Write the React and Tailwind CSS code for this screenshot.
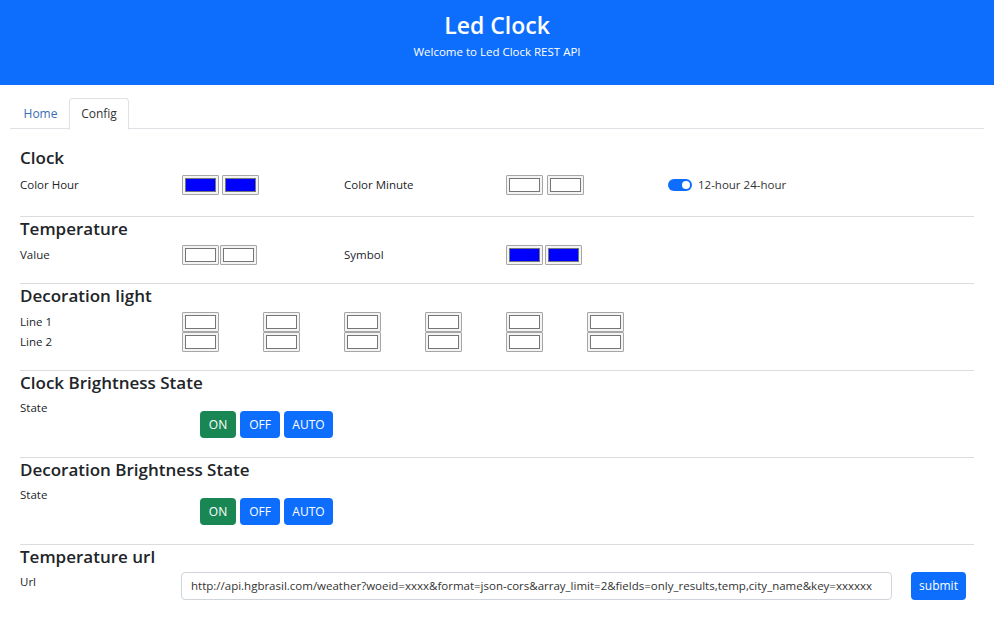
const font = { fontFamily: '"Open Sans", "Noto Sans", sans-serif' };

function Swatch({ color }) {
  return (
    <div className="h-[20px] w-[37px] rounded-[1px] border border-[#a6a6a6] bg-[#f4f4f4] p-[2px]">
      <div className="h-full w-full border border-[#767676]" style={{ background: color }} />
    </div>
  );
}

function Section({ title, children, last }) {
  return (
    <section className={last ? "pt-[1px]" : "border-b border-[#dcdcdc] pt-[1px]"}>
      <h2 className="h-[22px] text-[17px] font-semibold leading-[22px] text-[#212529]">{title}</h2>
      {children}
    </section>
  );
}

function StateButtons() {
  return (
    <div className="ml-[18px] mt-[13px] flex gap-[4px]">
      <button className="h-[27px] w-[36px] rounded-[4px] bg-[#198754] text-[12px] text-white">ON</button>
      <button className="h-[27px] w-[40px] rounded-[4px] bg-[#0d6efd] text-[12px] text-white">OFF</button>
      <button className="h-[27px] w-[49px] rounded-[4px] bg-[#0d6efd] text-[12px] text-white">AUTO</button>
    </div>
  );
}

export default function App() {
  const label = "text-[11.5px] leading-[20px] text-[#212529]";
  return (
    <div className="min-h-[618px] w-[994px] bg-white" style={font}>
      <header className="flex h-[85px] flex-col items-center bg-[#0d6efd] pt-[9px] text-white">
        <h1 className="text-[23px] font-semibold leading-[32px]">Led Clock</h1>
        <p className="mt-[3px] text-[11.5px] leading-[16px]">Welcome to Led Clock REST API</p>
      </header>

      <nav className="mx-[10px] mt-[13px] flex h-[31px] border-b border-[#dee2e6] pl-[2px] text-[12px]">
        <div className="flex h-[31px] w-[57px] items-center justify-center text-[#3b6db5]">Home</div>
        <div className="-mb-px flex h-[32px] w-[60px] items-center justify-center rounded-t-[4px] border border-b-white border-[#dee2e6] bg-white text-[#333]">
          Config
        </div>
      </nav>

      <main className="mx-[20px] mt-[17px] w-[954px]">
        <Section title="Clock">
          <div className="mt-[5px] grid h-[22px] grid-cols-[162px_162px_162px_162px_auto] items-center pb-0">
            <span className={label}>Color Hour</span>
            <div className="flex gap-[3px]">
              <Swatch color="#0000ff" />
              <Swatch color="#0000ff" />
            </div>
            <span className={label}>Color Minute</span>
            <div className="flex gap-[4px]">
              <Swatch color="#ffffff" />
              <Swatch color="#ffffff" />
            </div>
            <div className="flex items-center gap-[6px]">
              <div className="flex h-[12px] w-[24px] items-center justify-end rounded-full bg-[#0d6efd] pr-[2px]">
                <div className="h-[8px] w-[8px] rounded-full bg-white" />
              </div>
              <span className="text-[11.5px] text-[#333]">12-hour 24-hour</span>
            </div>
          </div>
          <div className="h-[20px]" />
        </Section>

        <Section title="Temperature">
          <div className="mt-[4px] grid h-[21px] grid-cols-[162px_162px_162px_162px] items-center">
            <span className={label}>Value</span>
            <div className="flex gap-[1px]">
              <Swatch color="#ffffff" />
              <Swatch color="#ffffff" />
            </div>
            <span className={label}>Symbol</span>
            <div className="flex gap-[2px]">
              <Swatch color="#0000ff" />
              <Swatch color="#0000ff" />
            </div>
          </div>
          <div className="h-[18px]" />
        </Section>

        <Section title="Decoration light">
          <div className="mt-[5px] grid grid-cols-[162px_81px_81px_81px_81px_81px_81px]">
            <div className="flex flex-col">
              <span className={`${label} h-[20px]`}>Line 1</span>
              <span className={`${label} h-[20px]`}>Line 2</span>
            </div>
            {[0, 1, 2, 3, 4, 5].map((i) => (
              <div key={i} className="flex flex-col">
                <Swatch color="#ffffff" />
                <Swatch color="#ffffff" />
              </div>
            ))}
          </div>
          <div className="h-[18px]" />
        </Section>

        <Section title="Clock Brightness State">
          <div className="mt-[4px] grid grid-cols-[162px_auto] items-start">
            <span className={label}>State</span>
            <StateButtons />
          </div>
          <div className="h-[19px]" />
        </Section>

        <Section title="Decoration Brightness State">
          <div className="mt-[4px] grid grid-cols-[162px_auto] items-start">
            <span className={label}>State</span>
            <StateButtons />
          </div>
          <div className="h-[19px]" />
        </Section>

        <Section title="Temperature url" last>
          <div className="mt-[4px] flex items-start">
            <span className={`${label} w-[161px]`}>Url</span>
            <div className="flex h-[28px] w-[711px] items-center rounded-[4px] border border-[#ced4da] px-[9px] text-[11.5px] text-[#333]">
              http://api.hgbrasil.com/weather?woeid=xxxx&amp;format=json-cors&amp;array_limit=2&amp;fields=only_results,temp,city_name&amp;key=xxxxxx
            </div>
            <button className="ml-[19px] h-[28px] w-[55px] rounded-[4px] bg-[#0d6efd] text-[12px] text-white">submit</button>
          </div>
        </Section>
      </main>
    </div>
  );
}
